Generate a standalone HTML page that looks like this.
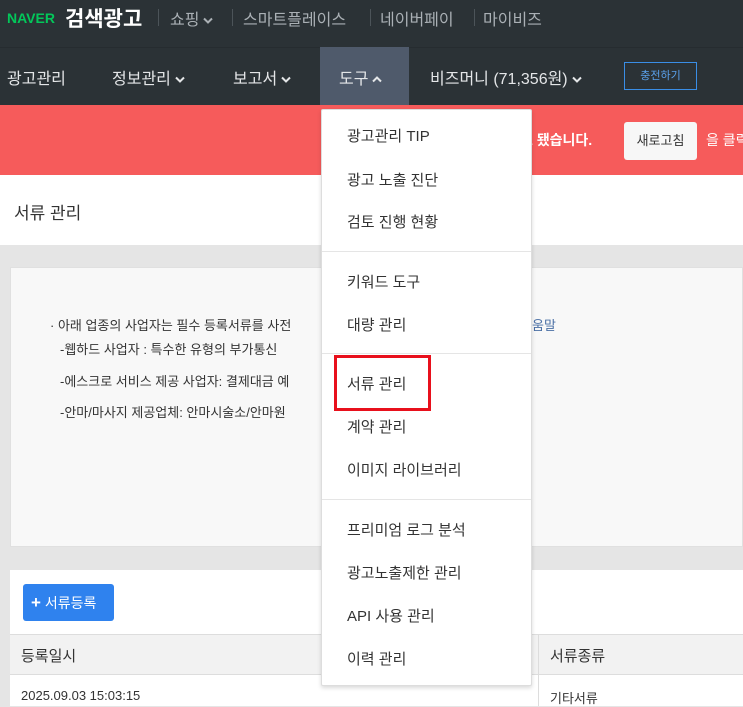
<!DOCTYPE html>
<html><head><meta charset="utf-8"><style>
*{margin:0;padding:0;box-sizing:border-box}
body{width:743px;height:706px;overflow:hidden;position:relative;background:#e5e5e5;font-family:"Liberation Sans","Noto Sans CJK KR",sans-serif;}
.a{position:absolute;white-space:nowrap}
.top{position:absolute;left:0;top:0;width:743px;height:105px;background:#2b3236}
.sep{position:absolute;top:47px;left:0;width:743px;height:1px;background:#262c30}
.tn{color:#aab0b5;font-size:16px;top:6px}
.bar{position:absolute;top:9px;width:1px;height:17px;background:#4c5459}
.nv{color:#e4e6e8;font-size:16px;top:65px}
.dd{position:absolute;left:321px;top:109px;width:211px;height:577px;background:#fff;border:1px solid #ddd;border-radius:2px;box-shadow:0 2px 4px rgba(0,0,0,.15)}
.di{position:absolute;left:25px;font-size:15px;color:#333}
.dl{position:absolute;left:0;width:209px;height:1px;background:#e5e5e5}
.t{font-size:13px;color:#333}
svg{vertical-align:middle;margin-left:4px}
</style></head><body>
<div class="top"></div><div class="sep"></div>
<div class="a" style="left:7px;top:10px;font-size:14px;font-weight:900;color:#03c75a">NAVER</div>
<div class="a" style="left:65px;top:3px;font-size:21px;font-weight:bold;color:#fff">검색광고</div>
<div class="bar" style="left:158px"></div>
<div class="a tn" style="left:170px">쇼핑<svg width="10" height="7" viewBox="0 0 10 7"><path d="M1 1.5L5 5.5L9 1.5" stroke="#aab0b5" stroke-width="2" fill="none"/></svg></div>
<div class="bar" style="left:232px"></div>
<div class="a tn" style="left:243px">스마트플레이스</div>
<div class="bar" style="left:370px"></div>
<div class="a tn" style="left:380px">네이버페이</div>
<div class="bar" style="left:474px"></div>
<div class="a tn" style="left:483px">마이비즈</div>
<div class="a" style="left:320px;top:47px;width:89px;height:58px;background:#4f5a6b"></div>
<div class="a nv" style="left:7px">광고관리</div>
<div class="a nv" style="left:112px">정보관리<svg width="10" height="7" viewBox="0 0 10 7"><path d="M1 1.5L5 5.5L9 1.5" stroke="#e4e6e8" stroke-width="2" fill="none"/></svg></div>
<div class="a nv" style="left:233px">보고서<svg width="10" height="7" viewBox="0 0 10 7"><path d="M1 1.5L5 5.5L9 1.5" stroke="#e4e6e8" stroke-width="2" fill="none"/></svg></div>
<div class="a nv" style="left:339px">도구<svg width="10" height="7" viewBox="0 0 10 7"><path d="M1 5.5L5 1.5L9 5.5" stroke="#e4e6e8" stroke-width="2" fill="none"/></svg></div>
<div class="a nv" style="left:430px">비즈머니 (71,356원)<svg width="10" height="7" viewBox="0 0 10 7"><path d="M1 1.5L5 5.5L9 1.5" stroke="#e4e6e8" stroke-width="2" fill="none"/></svg></div>
<div class="a" style="left:624px;top:62px;width:73px;height:28px;border:1px solid #3a8ee6;color:#5aa0ea;font-size:11px;text-align:center;line-height:26px">충전하기</div>
<div class="a" style="left:0;top:105px;width:743px;height:70px;background:#f65b5b"></div>
<div class="a" style="left:520px;top:130px;color:#fff;font-size:14px;font-weight:bold">도 됐습니다.</div>
<div class="a" style="left:624px;top:122px;width:73px;height:38px;background:#f7f7f7;border-radius:3px;font-size:13px;color:#333;text-align:center;line-height:38px">새로고침</div>
<div class="a" style="left:706px;top:130px;color:#fff;font-size:14px">을 클릭</div>
<div class="a" style="left:0;top:175px;width:743px;height:70px;background:#fff"></div>
<div class="a" style="left:14px;top:199px;font-size:17px;color:#333">서류 관리</div>
<div class="a" style="left:10px;top:267px;width:733px;height:280px;background:#f8f8f8;border:1px solid #e0e0e0"></div>
<div class="a t" style="left:50px;top:315px">· 아래 업종의 사업자는 필수 등록서류를 사전</div>
<div class="a t" style="left:532px;top:315px;color:#4a6fa5">움말</div>
<div class="a t" style="left:60px;top:339px">-웹하드 사업자 : 특수한 유형의 부가통신</div>
<div class="a t" style="left:60px;top:371px">-에스크로 서비스 제공 사업자: 결제대금 예</div>
<div class="a t" style="left:60px;top:402px">-안마/마사지 제공업체: 안마시술소/안마원</div>
<div class="a" style="left:10px;top:570px;width:733px;height:136px;background:#fff"></div>
<div class="a" style="left:23px;top:584px;width:91px;height:37px;background:#2f82ee;border-radius:3px;color:#fff;font-size:14px;line-height:37px;padding-left:8px"><b style="font-size:17px">+</b> 서류등록</div>
<div class="a" style="left:10px;top:634px;width:733px;height:41px;background:#f2f2f2;border-top:1px solid #ddd;border-bottom:1px solid #ddd"></div>
<div class="a" style="left:538px;top:634px;width:1px;height:72px;background:#ddd"></div>
<div class="a" style="left:21px;top:645px;font-size:15px;color:#333">등록일시</div>
<div class="a" style="left:550px;top:645px;font-size:15px;color:#333">서류종류</div>
<div class="a" style="left:21px;top:688px;font-size:13px;color:#333">2025.09.03 15:03:15</div>
<div class="a" style="left:550px;top:688px;font-size:13px;color:#333">기타서류</div>
<div class="dd">
<div class="di" style="top:15px">광고관리 TIP</div>
<div class="di" style="top:59px">광고 노출 진단</div>
<div class="di" style="top:101px">검토 진행 현황</div>
<div class="dl" style="top:141px"></div>
<div class="di" style="top:161px">키워드 도구</div>
<div class="di" style="top:204px">대량 관리</div>
<div class="dl" style="top:243px"></div>
<div class="di" style="top:263px">서류 관리</div>
<div class="di" style="top:306px">계약 관리</div>
<div class="di" style="top:349px">이미지 라이브러리</div>
<div class="dl" style="top:389px"></div>
<div class="di" style="top:409px">프리미엄 로그 분석</div>
<div class="di" style="top:452px">광고노출제한 관리</div>
<div class="di" style="top:495px">API 사용 관리</div>
<div class="di" style="top:538px">이력 관리</div>
</div>
<div class="a" style="left:334px;top:355px;width:97px;height:56px;border:3px solid #e8101c"></div>
</body></html>
